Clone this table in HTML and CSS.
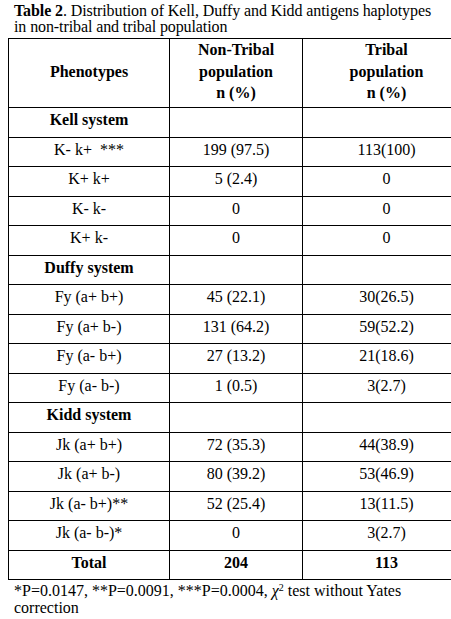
FILE: index.html
```html
<!DOCTYPE html>
<html>
<head>
<meta charset="utf-8">
<link rel="stylesheet" href="styles.css">
</head>
<body>
<div class="page">
  <p class="caption"><b>Table 2</b>. Distribution of Kell, Duffy and Kidd antigens haplotypes in non-tribal and tribal population</p>
  <table class="data">
    <thead>
      <tr>
        <th class="c1">Phenotypes</th>
        <th class="c2">Non-Tribal<br>population<br>n (%)</th>
        <th class="c3">Tribal<br>population<br>n (%)</th>
      </tr>
    </thead>
    <tbody>
      <tr class="sys"><td>Kell system</td><td></td><td></td></tr>
      <tr><td>K- k+&nbsp;&nbsp;***</td><td>199 (97.5)</td><td>113(100)</td></tr>
      <tr><td>K+ k+</td><td>5 (2.4)</td><td>0</td></tr>
      <tr><td>K- k-</td><td>0</td><td>0</td></tr>
      <tr><td>K+ k-</td><td>0</td><td>0</td></tr>
      <tr class="sys"><td>Duffy system</td><td></td><td></td></tr>
      <tr><td>Fy (a+ b+)</td><td>45 (22.1)</td><td>30(26.5)</td></tr>
      <tr><td>Fy (a+ b-)</td><td>131 (64.2)</td><td>59(52.2)</td></tr>
      <tr><td>Fy (a- b+)</td><td>27 (13.2)</td><td>21(18.6)</td></tr>
      <tr><td>Fy (a- b-)</td><td>1 (0.5)</td><td>3(2.7)</td></tr>
      <tr class="sys"><td>Kidd system</td><td></td><td></td></tr>
      <tr><td>Jk (a+ b+)</td><td>72 (35.3)</td><td>44(38.9)</td></tr>
      <tr><td>Jk (a+ b-)</td><td>80 (39.2)</td><td>53(46.9)</td></tr>
      <tr><td>Jk (a- b+)**</td><td>52 (25.4)</td><td>13(11.5)</td></tr>
      <tr><td>Jk (a- b-)*</td><td>0</td><td>3(2.7)</td></tr>
      <tr class="sys"><td>Total</td><td>204</td><td>113</td></tr>
    </tbody>
  </table>
  <p class="note">*P=0.0147, **P=0.0091, ***P=0.0004, <i>χ</i><sup>2</sup> test without Yates correction</p>
</div>
</body>
</html>
```

FILE: styles.css
```css
html, body {
  margin: 0;
  padding: 0;
  background: #fff;
}
body {
  font-family: "Liberation Serif", "Times New Roman", serif;
  font-size: 16px;
  color: #000;
}
.page {
  padding: 3px 0 0 8px;
  width: 435px;
}
.caption {
  margin: 0 0 3px 0;
  padding: 0 0 0 6px;
  width: 425px;
  line-height: 16px;
  letter-spacing: -0.1px;
}
.data {
  border-collapse: collapse;
  width: 435px;
  table-layout: fixed;
}
.data th,
.data td {
  border: 1px solid #000;
  text-align: center;
  vertical-align: middle;
  line-height: 21.5px;
}
.data th {
  font-weight: bold;
  padding: 0 4px 3.5px;
}
.data td {
  padding: 1px 4px 6px;
  height: 21.5px;
}
.c1 { width: 152px; }
.c2 { width: 124px; }
.c3 { width: 159px; }
.sys td {
  font-weight: bold;
}
.note {
  margin: 2px 0 0 0;
  padding: 0 6px;
  line-height: 17px;
}
.note sup {
  font-size: 10px;
  line-height: 0;
  vertical-align: 5px;
}
```
